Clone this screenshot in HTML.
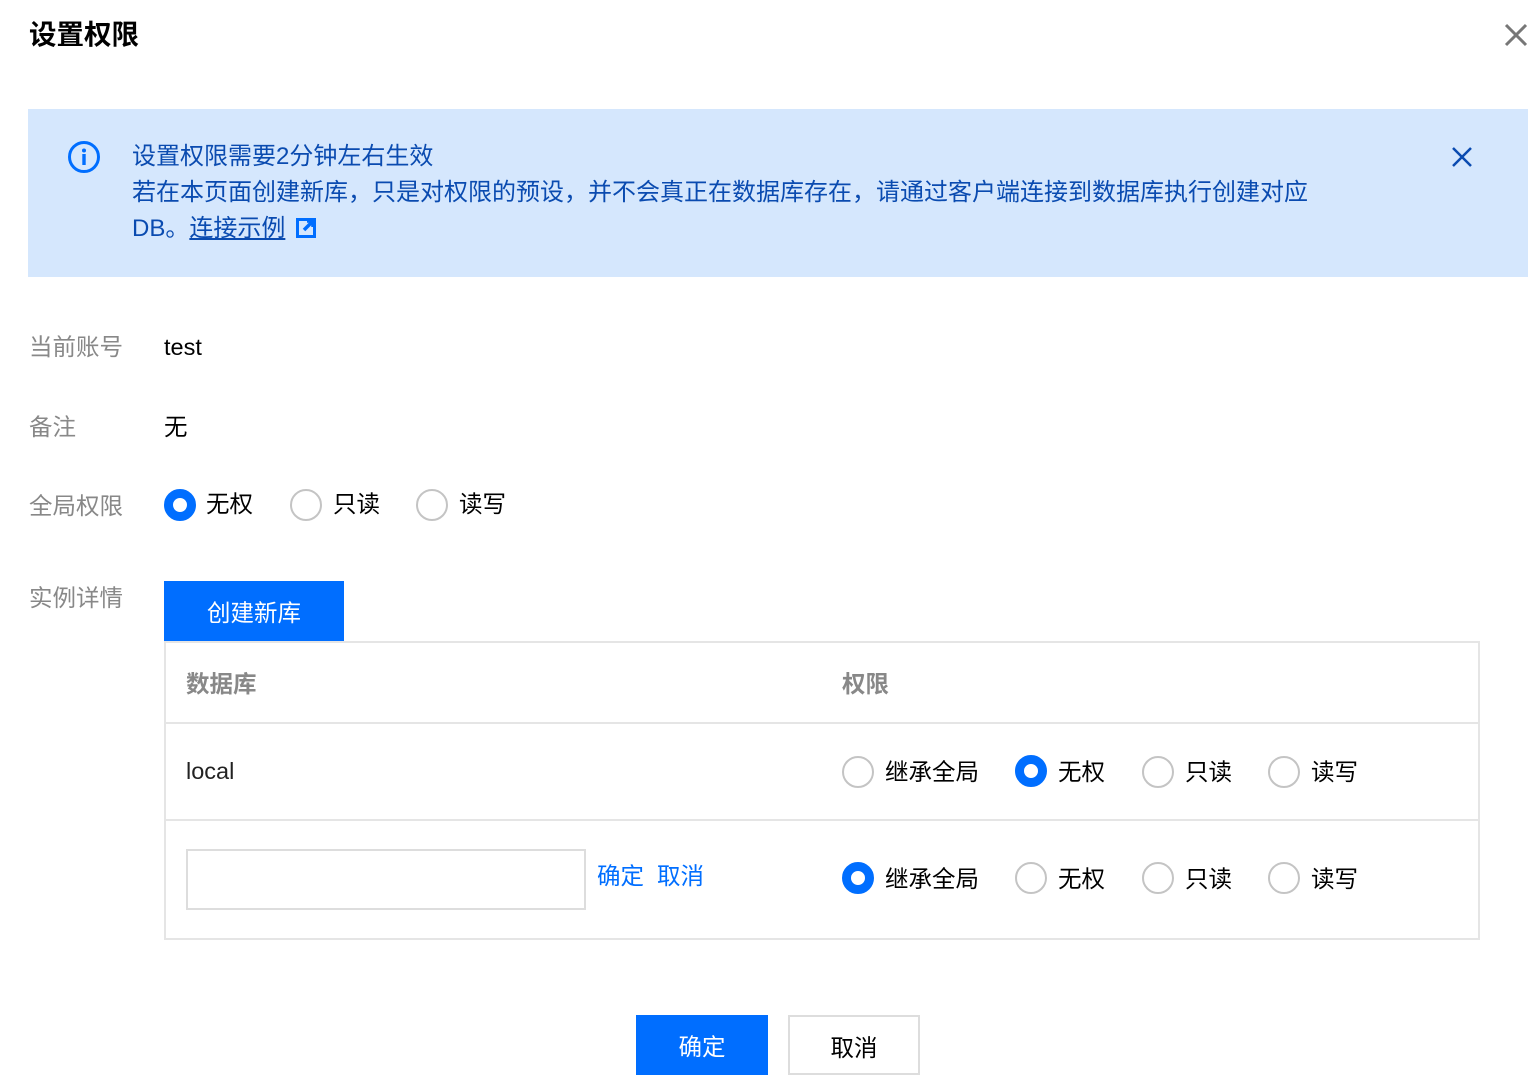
<!DOCTYPE html><html><head><meta charset="utf-8"><style>
body{margin:0;width:1534px;height:1086px;background:#fff;font-family:"Liberation Sans","Noto Sans CJK SC",sans-serif;position:relative;overflow:hidden;color:#000}
.a{position:absolute;white-space:nowrap;line-height:1}
.r{position:absolute;width:28px;height:28px;border:2px solid #c4c4c4;border-radius:50%;box-sizing:content-box;background:#fff}
.r.on{border:9px solid #006eff;width:14px;height:14px}
.lbl{color:#888;font-size:23.5px}
.t{font-size:23.5px;color:#000}
</style></head><body>
<div class="a" style="left:29px;top:21px;font-size:27.5px;font-weight:bold">设置权限</div>
<svg class="a" style="left:1503px;top:22px" width="26" height="26"><path d="M3 3L23 23M23 3L3 23" stroke="#777" stroke-width="3"/></svg>
<div class="a" style="left:28px;top:109px;width:1500px;height:168px;background:#d5e7fd"></div>
<svg class="a" style="left:67px;top:140px" width="34" height="34"><circle cx="17" cy="17" r="14.5" fill="none" stroke="#006eff" stroke-width="3"/><circle cx="17" cy="10.5" r="2" fill="#006eff"/><rect x="15.3" y="14" width="3.4" height="11" fill="#006eff"/></svg>
<div class="a" style="left:132px;top:139px;font-size:24px;color:#0a4bb0;line-height:36px;white-space:normal;width:1300px">设置权限需要2分钟左右生效<br>若在本页面创建新库，只是对权限的预设，并不会真正在数据库存在，请通过客户端连接到数据库执行创建对应<br>DB。<span style="text-decoration:underline">连接示例</span> <svg width="20" height="20" style="vertical-align:-2px;margin-left:4px"><rect x="0" y="0" width="20" height="20" fill="#006eff"/><rect x="3" y="3" width="14" height="14" fill="#d5e7fd"/><path d="M8 12L17 3M11 3H17V9" stroke="#006eff" stroke-width="3.5" fill="none"/></svg></div>
<svg class="a" style="left:1451px;top:146px" width="22" height="22"><path d="M2 2L20 20M20 2L2 20" stroke="#0a4bb0" stroke-width="2.5"/></svg>
<div class="a lbl" style="left:29px;top:336px">当前账号</div><div class="a t" style="left:164px;top:336px">test</div>
<div class="a lbl" style="left:29px;top:416px">备注</div><div class="a t" style="left:164px;top:416px">无</div>
<div class="a lbl" style="left:29px;top:495px">全局权限</div>
<div class="r on" style="left:164px;top:489px"></div><div class="a t" style="left:206px;top:493px">无权</div>
<div class="r" style="left:290px;top:489px"></div><div class="a t" style="left:333px;top:493px">只读</div>
<div class="r" style="left:416px;top:489px"></div><div class="a t" style="left:459px;top:493px">读写</div>
<div class="a lbl" style="left:29px;top:587px">实例详情</div>
<div class="a" style="left:164px;top:581px;width:180px;height:60px;background:#006eff;color:#fff;font-size:23.5px;line-height:64px;text-align:center">创建新库</div>
<div class="a" style="left:164px;top:641px;width:1312px;height:295px;border:2px solid #e5e5e5"></div>
<div class="a" style="left:166px;top:722px;width:1312px;height:2px;background:#e5e5e5"></div>
<div class="a" style="left:166px;top:819px;width:1312px;height:2px;background:#e5e5e5"></div>
<div class="a" style="left:186px;top:673px;font-size:23.5px;color:#888;font-weight:bold">数据库</div>
<div class="a" style="left:842px;top:673px;font-size:23.5px;color:#888;font-weight:bold">权限</div>
<div class="a t" style="left:186px;top:760px;color:#222">local</div>
<div class="r" style="left:842px;top:756px"></div><div class="a t" style="left:885px;top:761px">继承全局</div>
<div class="r on" style="left:1015px;top:755px"></div><div class="a t" style="left:1058px;top:761px">无权</div>
<div class="r" style="left:1142px;top:756px"></div><div class="a t" style="left:1185px;top:761px">只读</div>
<div class="r" style="left:1268px;top:756px"></div><div class="a t" style="left:1311px;top:761px">读写</div>
<div class="a" style="left:186px;top:849px;width:396px;height:57px;border:2px solid #ddd"></div>
<div class="a" style="left:597px;top:865px;font-size:23.5px;color:#006eff">确定&nbsp;&nbsp;取消</div>
<div class="r on" style="left:842px;top:862px"></div><div class="a t" style="left:885px;top:868px">继承全局</div>
<div class="r" style="left:1015px;top:862px"></div><div class="a t" style="left:1058px;top:868px">无权</div>
<div class="r" style="left:1142px;top:862px"></div><div class="a t" style="left:1185px;top:868px">只读</div>
<div class="r" style="left:1268px;top:862px"></div><div class="a t" style="left:1311px;top:868px">读写</div>
<div class="a" style="left:636px;top:1015px;width:132px;height:60px;background:#006eff;color:#fff;font-size:23.5px;line-height:64px;text-align:center">确定</div>
<div class="a" style="left:788px;top:1015px;width:128px;height:56px;border:2px solid #ddd;color:#000;font-size:23.5px;line-height:62px;text-align:center">取消</div>
</body></html>
